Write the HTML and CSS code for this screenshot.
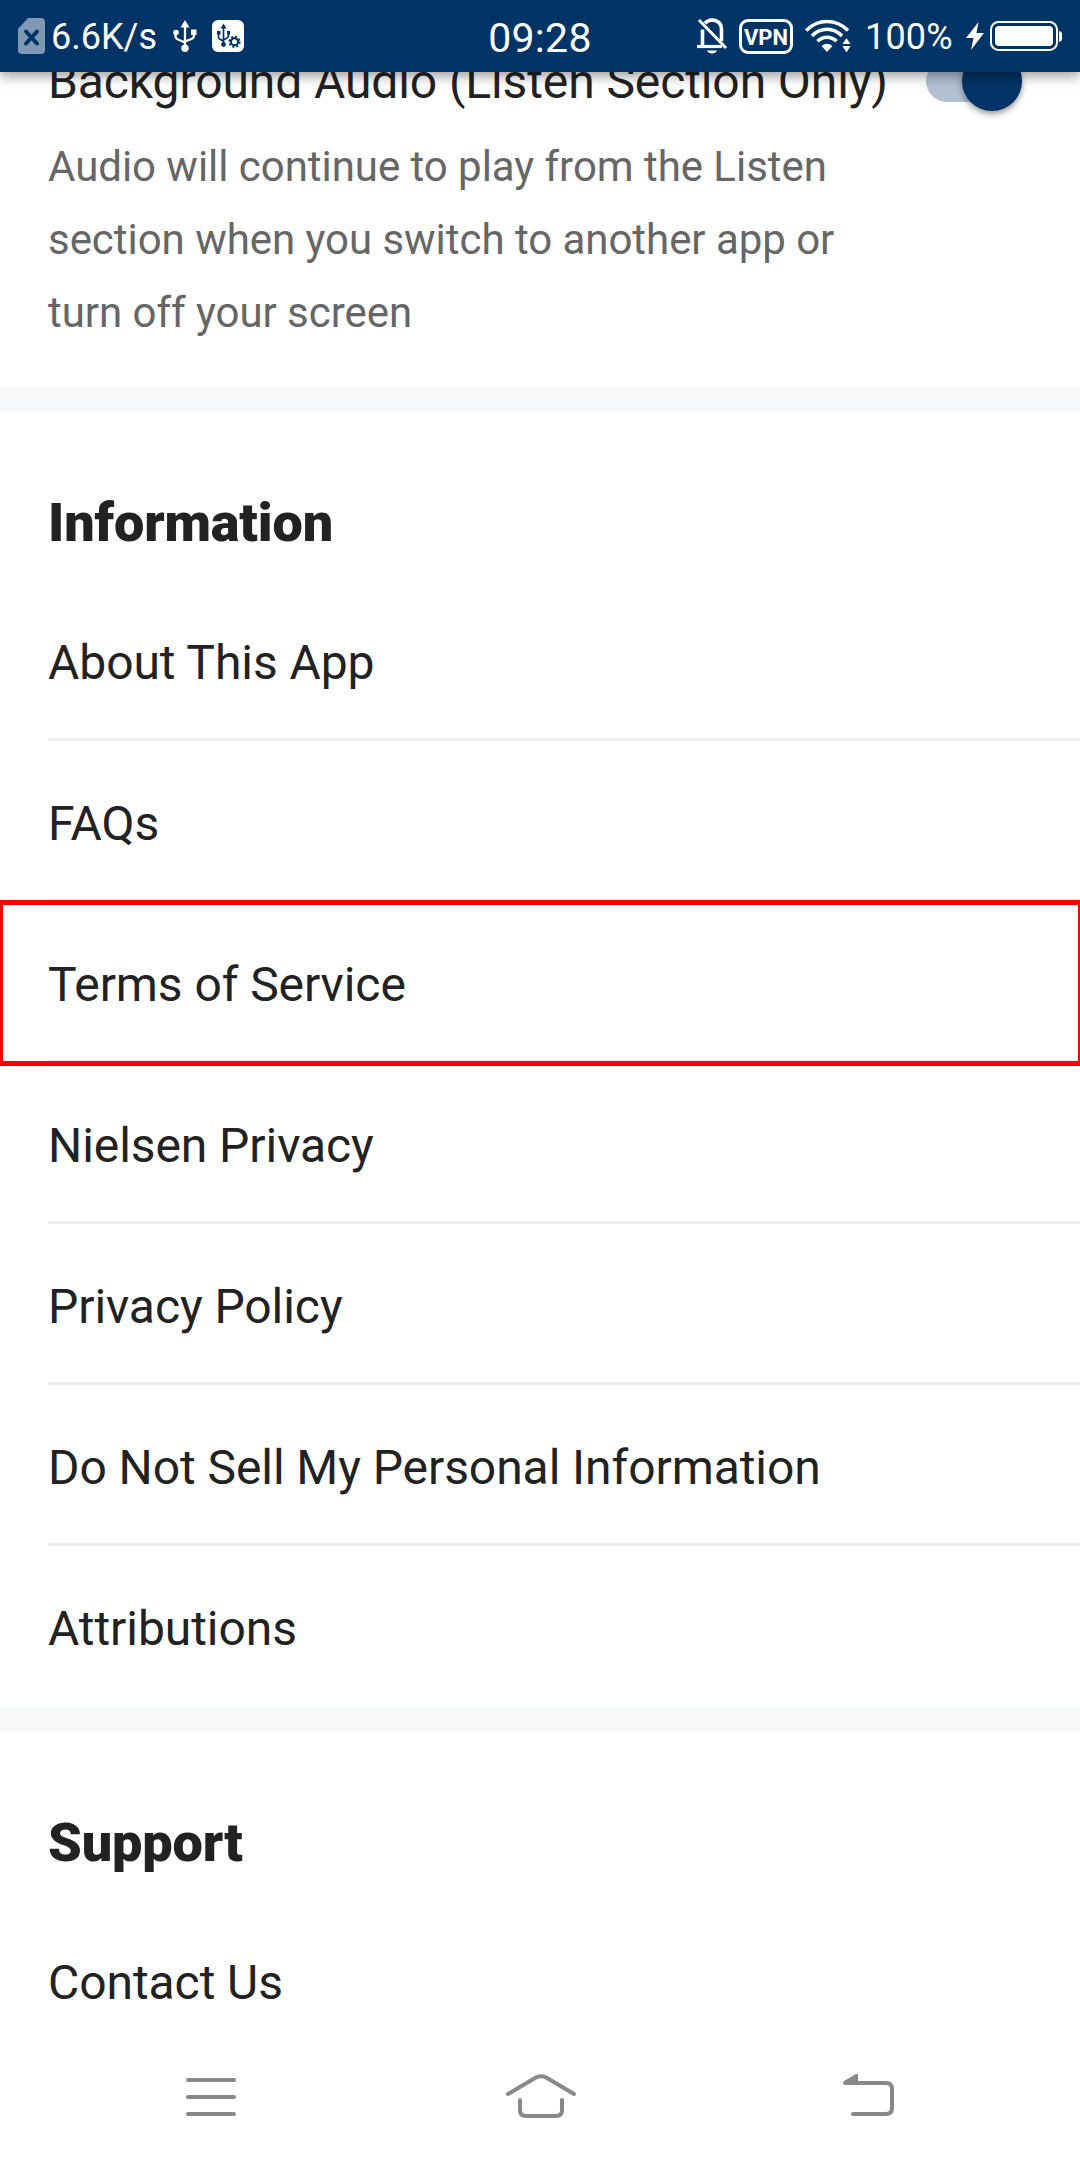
FILE: index.html
```html
<!DOCTYPE html>
<html lang="en">
<head>
<meta charset="utf-8">
<title>Settings</title>
<link rel="stylesheet" href="styles.css">
</head>
<body>
<div class="screen">
  <header class="status">
    <div class="status-group status-left">
      <svg class="sim" width="27" height="36" viewBox="0 0 27 36"><path d="M10 0H23a4 4 0 0 1 4 4V32a4 4 0 0 1-4 4H4a4 4 0 0 1-4-4V11Z" fill="#8099b2"/><path d="M8 13.500L19 25.500M19 13.500L8 25.500" stroke="#036" stroke-width="4" stroke-linecap="round"/></svg>
      <span class="speed">6.6K/s</span>
      <svg class="usb" width="24" height="32" viewBox="0 0 24 32" fill="none" stroke="#fff" stroke-width="2.300"><path d="M12 4V28M2.500 13V16Q2.500 18.500 5 19.500L12 22.500M21 12V15.500Q21 18 18.500 19L12 21.500"/><path d="M12 0L16.500 7.500H7.500Z" fill="#fff" stroke="none"/><circle cx="12" cy="28.300" r="3.700" fill="#fff" stroke="none"/><circle cx="3" cy="12.500" r="2.800" fill="#fff" stroke="none"/><path d="M18 9.500H23.500V15H18Z" fill="#fff" stroke="none"/></svg>
      <svg width="32" height="32" viewBox="0 0 32 32" fill="none" stroke="#036" stroke-width="1.700"><rect width="32" height="32" rx="6" fill="#fff" stroke="none"/><path d="M11.500 6V25M6.500 13V17Q6.500 19 11.500 21M16.500 13V16Q16 18 11.500 20"/><path d="M11.500 3.500L14.500 8.500H8.500Z" fill="#036" stroke="none"/><path d="M5 11H8.500V14.500H5ZM15 11H18V14.500H15Z" fill="#036" stroke="none"/><circle cx="11.500" cy="24.500" r="2.400" fill="#036" stroke="none"/><circle cx="22.500" cy="21.800" r="5.300" fill="none" stroke-width="1.600" stroke-dasharray="2.080 2.080"/><circle cx="22.500" cy="21.800" r="3.600" stroke-width="2.200"/></svg>
    </div>
    <div class="clock">09:28</div>
    <div class="status-group status-right">
      <svg class="bell" width="30" height="36" viewBox="0 0 30 36" fill="none" stroke="#fff"><path d="M5.500 28V11.500M8 5.200Q11 2 15 2Q24.500 2.500 24.500 12V23" stroke-width="3.600"/><path d="M0 28.500H25" stroke-width="3.200"/><path d="M2 2L29 30" stroke-width="3"/><path d="M10 32.500H20Q18.500 35.500 15 35.500T10 32.500Z" fill="#fff" stroke="none"/></svg>
      <span class="vpn">VPN</span>
      <svg class="wifi" width="46" height="34" viewBox="0 0 46 34" fill="none" stroke="#fff" stroke-width="3.500"><path d="M1.200 11.500Q10 2.500 22 2.500T43 11.500"/><path d="M7 17Q13.500 10.300 22 10.300T37 17"/><path d="M12.500 22.300Q16.500 18.200 22 18.200T31.500 22.300"/><path d="M16.500 27Q22 22.500 27.500 27L22 33Z" fill="#fff" stroke="none"/><path d="M41.500 19L45.500 25H37.500ZM41.500 33.500L37.500 27H45.500Z" fill="#fff" stroke="none"/></svg>
      <span class="percent">100%</span>
      <svg class="bolt" width="18" height="30" viewBox="0 0 18 30"><path d="M12.500 1L0 17H7.500L5 29L18 12H10.500Z" fill="#fff"/></svg>
      <svg width="72" height="30" viewBox="0 0 72 30"><rect x="1" y="1" width="66" height="28" rx="7.500" fill="none" stroke="#fff" stroke-width="2"/><rect x="5" y="5" width="58" height="20" rx="4" fill="#fff"/><path d="M69 10Q72 10.500 72 13V17.500Q72 20.500 69 21Z" fill="#fff"/></svg>
    </div>
  </header>

  <main class="content">
    <section class="setting">
      <div class="setting-text">
        <h2 class="setting-title">Background Audio (Listen Section Only)</h2>
        <p class="setting-note">Audio will continue to play from the Listen<br>section when you switch to another app or<br>turn off your screen</p>
      </div>
      <div class="switch"><div class="thumb"></div></div>
    </section>

    <section class="group">
      <h1 class="heading">Information</h1>
      <ul class="list">
        <li class="row">About This App</li>
        <li class="row">FAQs</li>
        <li class="row marked">Terms of Service</li>
        <li class="row">Nielsen Privacy</li>
        <li class="row">Privacy Policy</li>
        <li class="row">Do Not Sell My Personal Information</li>
        <li class="row">Attributions</li>
      </ul>
    </section>

    <section class="group">
      <h1 class="heading">Support</h1>
      <ul class="list">
        <li class="row">Contact Us</li>
      </ul>
    </section>
  </main>

  <nav class="nav">
    <svg width="50" height="44" viewBox="0 0 50 44"><path d="M2 7H48M2 24H48M2 41H48" stroke="#888" stroke-width="4" stroke-linecap="round"/></svg>
    <svg width="70" height="44" viewBox="0 0 70 44" fill="none" stroke="#888" stroke-width="4" stroke-linecap="round"><path d="M3 21L30 5Q36 1.500 42 5L69 21"/><path d="M15 27V37Q15 43 21 43H51Q57 43 57 37V27"/></svg>
    <svg width="51" height="44" viewBox="0 0 51 44"><path d="M10 41H43Q49 41 49 35V16Q49 10 43 10H8" fill="none" stroke="#888" stroke-width="4" stroke-linecap="round"/><path d="M1 8L13 1Q15 .500 15 2V12H2Q-.500 11 .300 9Z" fill="#888"/></svg>
  </nav>
</div>
</body>
</html>
```
FILE: styles.css
```css
*, *::before { box-sizing: border-box; margin: 0; padding: 0; }
body { background: #fff; font-family: Roboto, sans-serif; color: #222; }
svg { display: block; flex: none; overflow: visible; }

.screen { width: 1080px; height: 2160px; display: flex; flex-direction: column; overflow: hidden; background: #fff; }

.status {
  position: relative; z-index: 2; flex: none; height: 72px;
  display: grid; grid-template-columns: 470px 140px 470px; align-items: center;
  background: #036; color: #fff;
  box-shadow: 0 4px 12px rgba(0, 0, 0, .4);
}
.status-group { display: flex; align-items: center; }
.status-left { padding-left: 18px; }
.status-right { justify-content: flex-end; padding-right: 18px; }
.speed { width: 128px; padding: 2px 0 0 6px; font-size: 36px; line-height: 42px; white-space: nowrap; }
.usb { margin-right: 15px; }
.clock { text-align: center; font-size: 41px; line-height: 46px; padding-top: 4px; letter-spacing: .3px; }
.bell { margin-right: 12px; }
.vpn {
  width: 54px; height: 35px; border: 3px solid #fff; border-radius: 9px;
  font-size: 22px; font-weight: 700; line-height: 31px; text-align: center;
}
.wifi { margin-left: 12px; }
.percent { width: 115px; padding: 2px 0 0 14px; font-size: 36px; line-height: 42px; letter-spacing: .2px; white-space: nowrap; }
.bolt { margin-right: 6px; }

.content { flex: 1; min-height: 0; overflow: visible; }
.setting { display: flex; justify-content: space-between; height: 315px; padding: 0 58px 0 48px; }
.setting-text { margin-top: -18px; }
.setting-title { font-size: 48px; font-weight: 400; line-height: 56px; letter-spacing: -.1px; white-space: nowrap; }
.setting-note { margin-top: 20px; font-size: 42px; line-height: 73px; letter-spacing: -.04px; color: #666; white-space: nowrap; }
.switch { width: 96px; height: 42px; margin-top: -12px; border-radius: 21px; background: #b2c2d3; display: flex; justify-content: flex-end; align-items: center; }
.thumb { width: 60px; height: 60px; border-radius: 50%; background: #036; box-shadow: 0 3px 6px rgba(0, 0, 0, .4); }

.group { border-top: 24px solid #f6f8fa; }
.heading { height: 169px; padding: 80px 48px 0; font-size: 54px; font-weight: 900; line-height: 63px; letter-spacing: -.15px; }
.list { list-style: none; }
.row { height: 161px; margin-left: 48px; padding-top: 55px; border-bottom: 3px solid #eee; font-size: 48px; line-height: 56px; letter-spacing: -.07px; }
.row:last-child { border-bottom: 0; }
.marked { position: relative; }
.marked::before { content: ""; position: absolute; top: -2px; left: -48px; width: 1080px; height: 166px; border: solid #f00; border-width: 5px 2px 5px 3px; }

.nav { position: relative; flex: none; height: 118px; padding: 31px 186px 0; display: flex; justify-content: space-between; background: #fff; }
```
